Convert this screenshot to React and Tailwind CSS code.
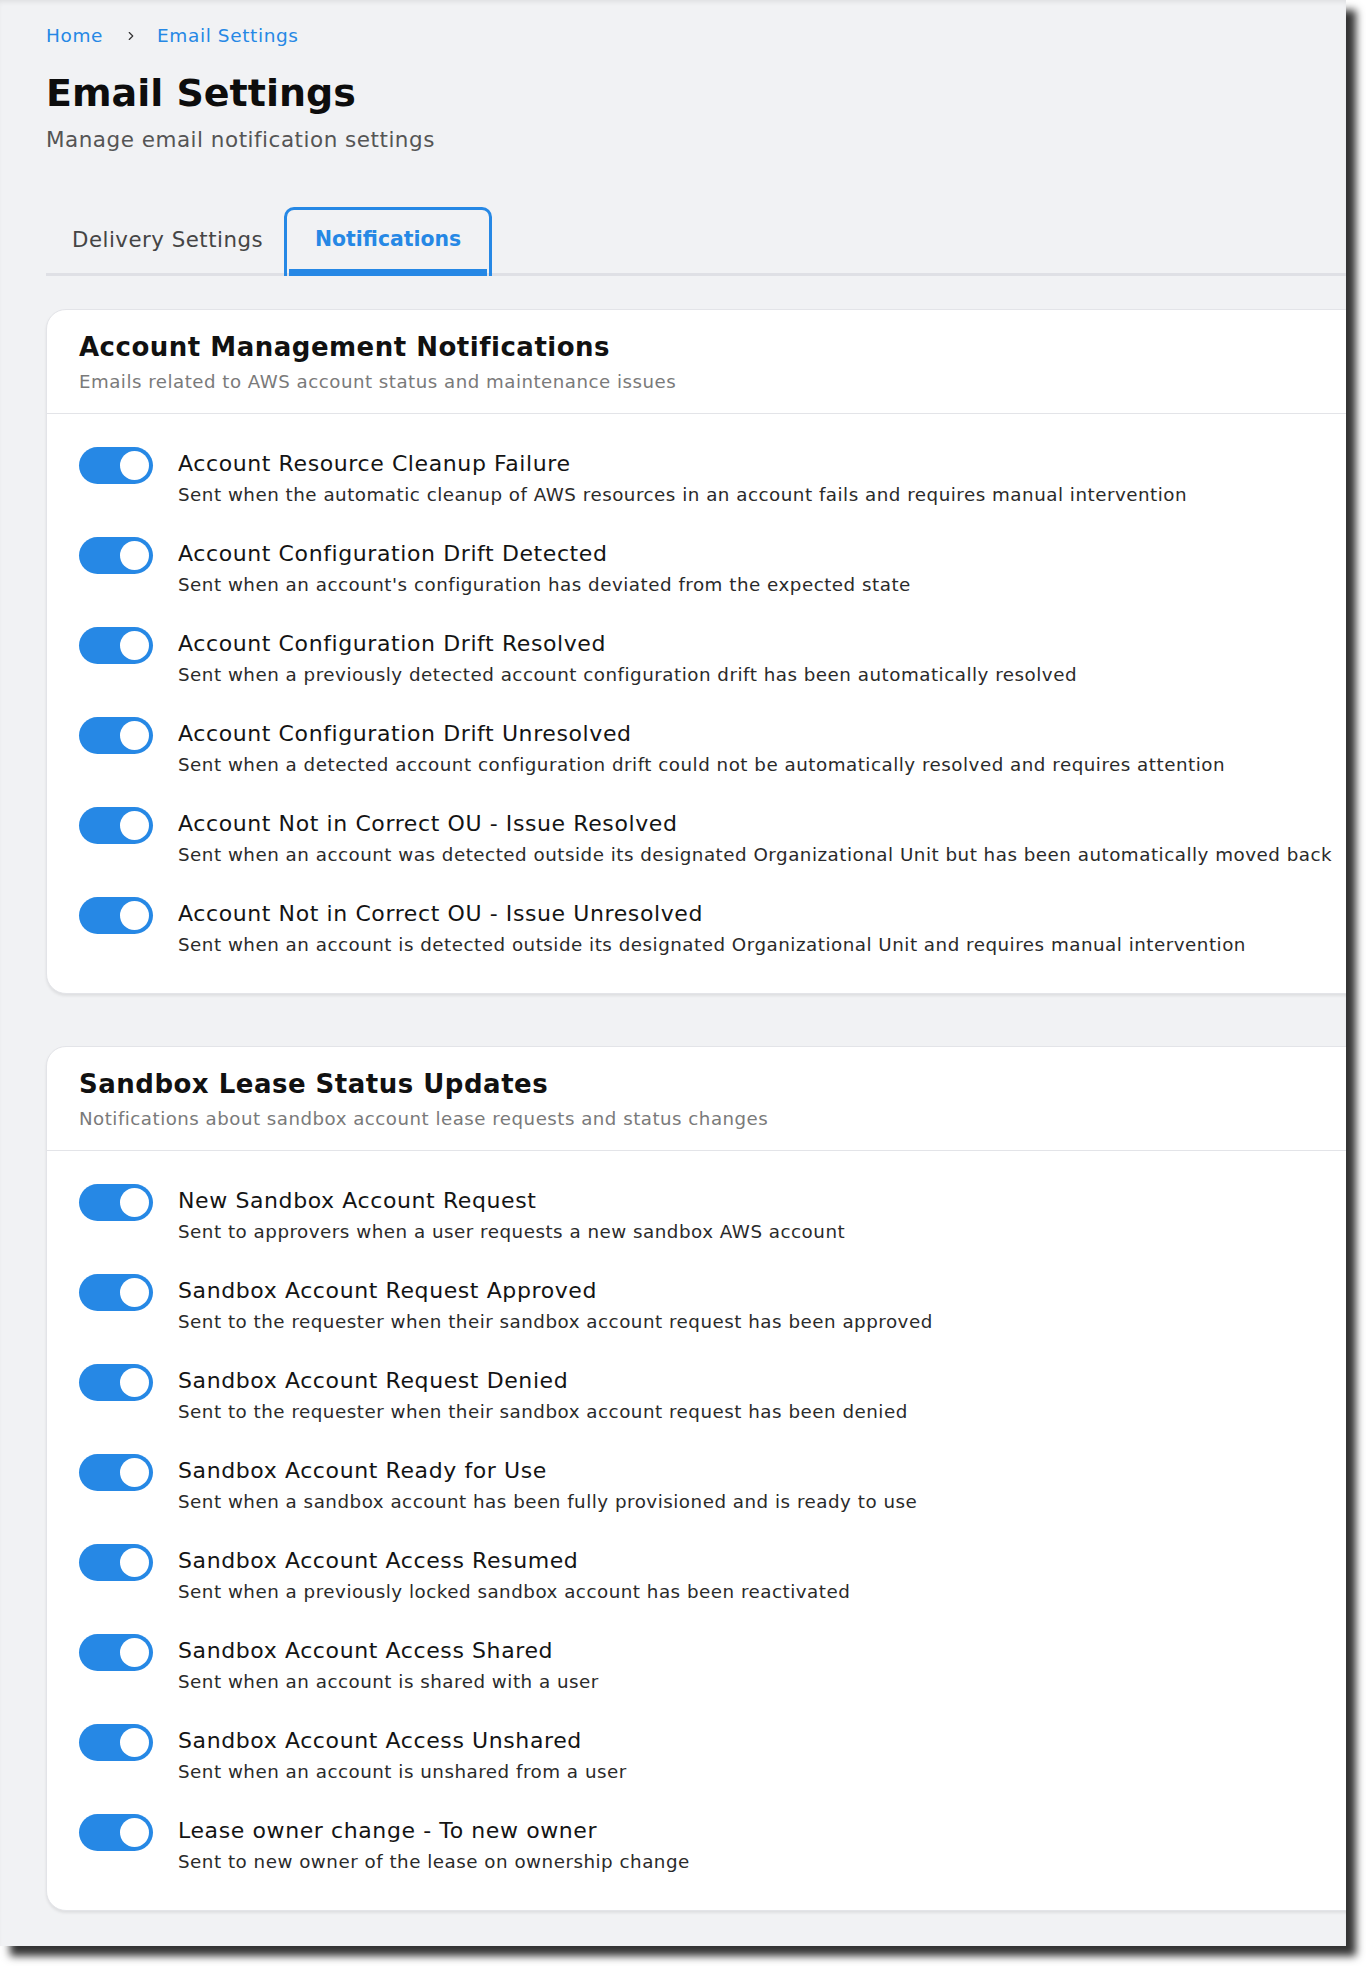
import React, { useState } from "react";
import { ChevronRight } from "lucide-react";

const accountItems = [
  {
    title: "Account Resource Cleanup Failure",
    desc: "Sent when the automatic cleanup of AWS resources in an account fails and requires manual intervention",
  },
  {
    title: "Account Configuration Drift Detected",
    desc: "Sent when an account's configuration has deviated from the expected state",
  },
  {
    title: "Account Configuration Drift Resolved",
    desc: "Sent when a previously detected account configuration drift has been automatically resolved",
  },
  {
    title: "Account Configuration Drift Unresolved",
    desc: "Sent when a detected account configuration drift could not be automatically resolved and requires attention",
  },
  {
    title: "Account Not in Correct OU - Issue Resolved",
    desc: "Sent when an account was detected outside its designated Organizational Unit but has been automatically moved back",
  },
  {
    title: "Account Not in Correct OU - Issue Unresolved",
    desc: "Sent when an account is detected outside its designated Organizational Unit and requires manual intervention",
  },
];

const sandboxItems = [
  {
    title: "New Sandbox Account Request",
    desc: "Sent to approvers when a user requests a new sandbox AWS account",
  },
  {
    title: "Sandbox Account Request Approved",
    desc: "Sent to the requester when their sandbox account request has been approved",
  },
  {
    title: "Sandbox Account Request Denied",
    desc: "Sent to the requester when their sandbox account request has been denied",
  },
  {
    title: "Sandbox Account Ready for Use",
    desc: "Sent when a sandbox account has been fully provisioned and is ready to use",
  },
  {
    title: "Sandbox Account Access Resumed",
    desc: "Sent when a previously locked sandbox account has been reactivated",
  },
  {
    title: "Sandbox Account Access Shared",
    desc: "Sent when an account is shared with a user",
  },
  {
    title: "Sandbox Account Access Unshared",
    desc: "Sent when an account is unshared from a user",
  },
  {
    title: "Lease owner change - To new owner",
    desc: "Sent to new owner of the lease on ownership change",
  },
];

const Toggle = ({ on, onChange }) => (
  <button
    type="button"
    onClick={onChange}
    className={`shrink-0 w-[74px] h-[37px] rounded-full flex items-center px-[4px] -mt-[3px] ${
      on ? "bg-[#2688e5] justify-end" : "bg-[#c5c8ce] justify-start"
    }`}
  >
    <span className="w-[29px] h-[29px] rounded-full bg-white" />
  </button>
);

const NotificationRow = ({ item }) => {
  const [on, setOn] = useState(true);
  return (
    <div className="flex items-start gap-[25px]">
      <Toggle on={on} onChange={() => setOn(!on)} />
      <div>
        <div className="text-[22px] leading-[28px] tracking-[0.6px] text-[#141414] whitespace-nowrap">
          {item.title}
        </div>
        <div className="text-[18.3px] leading-[26px] tracking-[0.5px] mt-[4px] text-[#2a2a2a] whitespace-nowrap">
          {item.desc}
        </div>
      </div>
    </div>
  );
};

const Section = ({ title, subtitle, items }) => (
  <div className="w-[1360px] bg-white rounded-[20px] border border-[#e3e4e8] shadow-[0_2px_3px_rgba(0,0,0,0.08)]">
    <div className="px-[32px] pt-[20px] pb-[19px] border-b border-[#e3e4e8]">
      <h2 className="text-[26px] leading-[34px] tracking-[0.5px] font-bold text-[#111]">
        {title}
      </h2>
      <p className="text-[18.2px] leading-[24px] tracking-[0.5px] mt-[6px] text-[#7a7a7a]">
        {subtitle}
      </p>
    </div>
    <div className="px-[32px] pt-[36px] pb-[35px] flex flex-col gap-[32px]">
      {items.map((item) => (
        <NotificationRow key={item.title} item={item} />
      ))}
    </div>
  </div>
);

const App = () => {
  const [tab, setTab] = useState("notifications");

  return (
    <div className="w-[1366px] h-[1966px] bg-white font-['DejaVu_Sans',sans-serif]">
      <div className="w-[1346px] h-[1946px] bg-[#f1f2f4] overflow-hidden shadow-[10px_10px_8px_rgba(0,0,0,0.8),inset_0_4px_5px_-2px_rgba(0,0,0,0.08)]">
        <div className="pl-[46px] pt-[24px]">
          <nav className="flex items-center text-[18.5px] leading-[24px] tracking-[0.6px] text-[#2688e5]">
            <span>Home</span>
            <ChevronRight size={14} strokeWidth={2} className="ml-[21px] mr-[19px] text-[#333]" />
            <span>Email Settings</span>
          </nav>

          <h1 className="mt-[21px] text-[38px] leading-[48px] font-bold text-[#0d0d0d]">
            Email Settings
          </h1>
          <p className="mt-[9px] text-[21.5px] leading-[28px] tracking-[0.5px] text-[#555]">
            Manage email notification settings
          </p>

          <div className="mt-[53px] flex items-end border-b-[3px] border-[#dfe0e5]">
            <button
              type="button"
              onClick={() => setTab("delivery")}
              className="h-[66px] pl-[26px] pr-[21px] text-[21.3px] tracking-[0.5px] text-[#454545]"
            >
              Delivery Settings
            </button>
            <button
              type="button"
              onClick={() => setTab("notifications")}
              className="-mb-[3px] h-[69px] flex flex-col border-[3px] border-b-0 border-[#2688e5] rounded-t-[10px] px-[2px]"
            >
              <span className="flex-1 flex items-center px-[26px] text-[20.4px] font-bold text-[#2688e5]">
                Notifications
              </span>
              <span className="h-[7px] bg-[#2688e5]" />
            </button>
          </div>

          {tab === "notifications" ? (
            <div className="mt-[33px] flex flex-col gap-[52px]">
              <Section
                title="Account Management Notifications"
                subtitle="Emails related to AWS account status and maintenance issues"
                items={accountItems}
              />
              <Section
                title="Sandbox Lease Status Updates"
                subtitle="Notifications about sandbox account lease requests and status changes"
                items={sandboxItems}
              />
            </div>
          ) : (
            <div className="mt-[33px] text-[18px] text-[#777]">Delivery settings</div>
          )}
        </div>
      </div>
    </div>
  );
};

export default App;
